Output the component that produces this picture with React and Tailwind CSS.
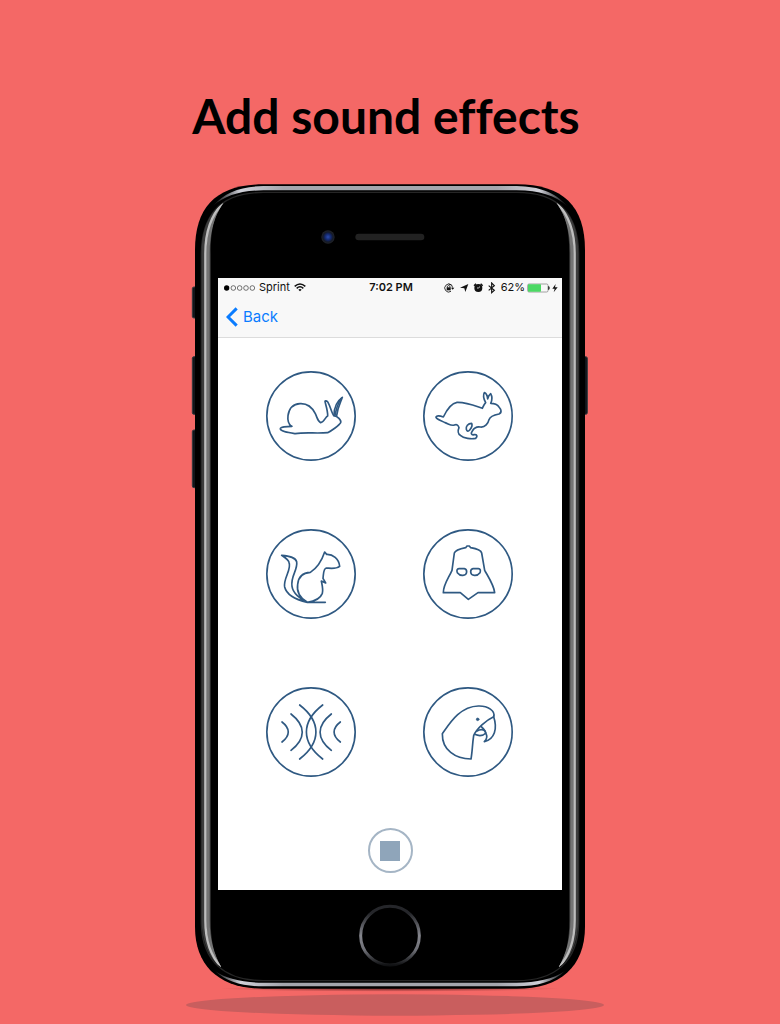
import React from "react";

const effects = [
  {
    name: "Slow",
    art: (
      <>
        <path d="M96 184C80 184 60 186 61 192C63 199 82 202 106 206C135 201 168 206 203 203C214 198 238 181 242 173C245 166 232 153 222 152C216 148 212 126 204 112C200 107 195 106 195 110C198 122 204 140 203 153C196 156 192 172 182 173C172 168 172 158 166 146C154 122 137 115 120 116C99 117 87 132 84 152C82 168 87 178 94 184" />
        <path d="M222 152C222 130 231 108 247 97C243 110 233 126 230 152" />
        <path d="M226 150C228 132 234 116 243 101" />
      </>
    ),
  },
  {
    name: "Fast",
    art: (
      <>
        <path d="M196 130C178 124 150 111 120 112C102 115 88 137 79 156C70 153 57 150 57 157C59 164 75 167 84 173C94 176 104 184 112 180C120 177 124 181 126 188C122 197 123 207 130 211C140 220 163 223 176 220C183 213 180 208 171 209C163 211 161 205 166 198C171 189 178 184 190 186C204 188 214 174 216 164C219 154 230 150 246 147C256 142 252 133 246 126C241 118 233 115 221 115C226 105 225 93 221 86C216 90 213 95 212 102C211 92 206 84 202 83C198 90 200 102 206 113C200 119 199 124 196 130Z" />
        <path d="M164 175C153 175 146 184 148 193C150 200 154 200 158 195C163 189 167 181 164 175Z" />
      </>
    ),
  },
  {
    name: "Squirrel",
    art: (
      <path d="M196 238H142C112 231 80 217 74 192C69 166 96 139 87 118C84 108 69 100 65 97C88 99 106 102 110 116C114 142 91 159 96 190C99 210 120 229 142 238C119 224 109 208 113 184C115 162 129 149 151 148C170 136 186 111 194 87L200 94C218 93 237 108 239 130C227 139 213 136 199 135C190 137 191 150 189 166L197 180L184 174C187 188 190 200 187 211C181 227 162 235 142 238" />
    ),
  },
  {
    name: "Villain",
    art: (
      <>
        <path d="M146 74L150 69H157L161 74C173 76 192 80 194 90L203 142C214 162 231 187 233 209H183L154 229L130 209H79C79 184 95 165 105 142L112 90C115 81 132 77 146 74Z" />
        <path d="M126 137H142Q149 138 149 147Q148 157 138 157Q128 158 121 149Q117 138 126 137Z" />
        <path d="M184 137H168Q161 138 161 147Q162 157 172 157Q182 158 189 149Q193 138 184 137Z" />
      </>
    ),
  },
  {
    name: "Echo",
    art: (
      <>
        <path d="M66 123C91 142 91 164 66 183" />
        <path d="M93 99C138 134 138 173 93 208" />
        <path d="M119 72C184 122 184 184 119 234" />
        <path d="M241 123C216 142 216 164 241 183" />
        <path d="M214 99C169 134 169 173 214 208" />
        <path d="M188 72C123 122 123 184 188 234" />
      </>
    ),
  },
  {
    name: "Parrot",
    art: (
      <>
        <path d="M162 234C115 234 75 207 76 158C100 124 130 76 184 75C213 74 236 90 230 107C208 117 178 144 170 164C166 190 166 212 162 234Z" />
        <path d="M230 107C242 143 233 174 202 182C210 174 211 164 206 157C205 147 200 143 193 137" />
        <path d="M173 160C187 166 200 163 207 156M180 150C190 144 200 146 205 151" />
        <circle cx="182" cy="115" r="4" fill="currentColor" strokeWidth="2" />
      </>
    ),
  },
];

function EffectButton({ name, art }) {
  return (
    <button type="button" aria-label={name} className="size-[90px] rounded-full text-[#2f5982]">
      <svg
        viewBox="18 18 270 270"
        className="size-full"
        fill="none"
        stroke="currentColor"
        strokeWidth="5"
        strokeLinecap="round"
        strokeLinejoin="round"
        aria-hidden="true"
      >
        <circle cx="153" cy="153" r="132.5" />
        {art}
      </svg>
    </button>
  );
}

function SideHighlight() {
  return (
    <>
      <path d="M131 98C84 130 65 180 65 250V2250C66 2320 90 2370 124 2392C100 2350 92 2310 92 2250V250C92 180 101 140 131 98Z" fill="#3c3c3c" />
      <g clipPath="url(#band)">
        <path d="M131 100C98 135 84 185 84 250V2250C84 2320 100 2360 124 2390" stroke="#747474" strokeWidth="10" />
        <path d="M131 98C92 135 76 185 76 250V2250C76 2320 98 2365 124 2391" stroke="#bdbdbd" strokeWidth="7" />
      </g>
    </>
  );
}

function PhoneShell() {
  return (
    <svg
      viewBox="0 0 1290 2562"
      className="pointer-events-none absolute -left-[15px] -top-[14px] h-[854px] w-[430px] max-w-none"
      fill="none"
      aria-hidden="true"
    >
      <defs>
        <clipPath id="band">
          <path d="M131 98C84 130 65 180 65 250V2250C66 2320 90 2370 124 2392C100 2350 92 2310 92 2250V250C92 180 101 140 131 98Z" />
        </clipPath>
        <linearGradient id="rim" x1="95" x2="1165" y1="0" y2="0" gradientUnits="userSpaceOnUse">
          <stop offset="0" stopColor="#b9bbc4" stopOpacity="0" />
          <stop offset=".08" stopColor="#cfd0d8" />
          <stop offset=".2" stopColor="#a4a6ad" />
          <stop offset=".8" stopColor="#a4a6ad" />
          <stop offset=".92" stopColor="#cfd0d8" />
          <stop offset="1" stopColor="#b9bbc4" stopOpacity="0" />
        </linearGradient>
        <linearGradient id="ring" x1="0" y1="0" x2="0" y2="1">
          <stop offset="0" stopColor="#25262a" />
          <stop offset=".12" stopColor="#25262a" />
          <stop offset=".5" stopColor="#85868d" />
          <stop offset=".75" stopColor="#6c6d74" />
          <stop offset="1" stopColor="#101113" />
        </linearGradient>
        <radialGradient id="contact">
          <stop offset="0" stopColor="#5a2020" stopOpacity=".8" />
          <stop offset="1" stopColor="#5a2020" stopOpacity="0" />
        </radialGradient>
        <radialGradient id="lens">
          <stop offset="0" stopColor="#2a4bb0" />
          <stop offset=".5" stopColor="#122461" />
          <stop offset=".75" stopColor="#151a26" />
          <stop offset="1" stopColor="#22242a" />
        </radialGradient>
      </defs>
      <ellipse cx="645" cy="2505" rx="627" ry="32" fill="#c95e5e" />
      <ellipse cx="630" cy="2456" rx="510" ry="9" fill="url(#contact)" />
      <g fill="#11151a" stroke="#33383d" strokeWidth="3">
        <rect x="37" y="351" width="14" height="93" rx="5" />
        <rect x="37" y="560" width="14" height="173" rx="5" />
        <rect x="37" y="780" width="14" height="173" rx="5" />
        <rect x="1208" y="560" width="14" height="173" rx="5" />
      </g>
      <path
        d="M45 240C45 110 110 43 250 43H1010C1150 43 1215 110 1215 240V2270C1215 2390 1140 2456 1010 2456H250C120 2456 45 2390 45 2270Z"
        fill="#000"
      />
      <path d="M64 250C66 125 130 67 250 67H1010C1130 67 1194 125 1196 250V2260C1194 2375 1125 2432 1010 2432H250C135 2432 66 2375 64 2260Z" stroke="#262626" strokeWidth="4" />
      <path d="M98 108C137 66 180 50 250 48H1010C1080 50 1123 66 1162 108C1123 76 1080 62 1010 61H250C180 62 137 76 98 108Z" fill="url(#rim)" />
      <path d="M105 2403C140 2436 190 2449 250 2449H1010C1070 2449 1120 2436 1155 2403C1120 2427 1070 2438 1010 2438H250C190 2438 140 2427 105 2403Z" fill="url(#rim)" />
      <SideHighlight />
      <g transform="translate(1260 0) scale(-1 1)">
        <SideHighlight />
      </g>
      <circle cx="444" cy="201" r="20" fill="url(#lens)" />
      <rect x="526" y="191" width="207" height="20" rx="10" fill="#222" />
      <circle cx="630" cy="2297" r="88" stroke="url(#ring)" strokeWidth="9" />
    </svg>
  );
}

function StatusIcons() {
  return (
    <svg viewBox="0 0 162 36" className="h-3 w-[54px]" fill="none" stroke="#111" strokeWidth="3" aria-hidden="true">
      <path d="M25 9A12 12 0 1 0 24 28M17 6A12 12 0 0 1 29 17" strokeWidth="2.5" />
      <path d="M24 17H34L29 23Z" fill="#111" stroke="none" />
      <rect x="11" y="16" width="12" height="9" fill="#111" stroke="none" />
      <path d="M13 17V13Q17 8 21 13V17" strokeWidth="2.5" />
      <path d="M51 17L76 6L67 30L64 19Z" fill="#111" stroke="none" />
      <circle cx="106" cy="18" r="12" fill="#111" stroke="none" />
      <path d="M93 11L99 5M113 5L119 11" strokeWidth="4" />
      <path d="M106 18L111 14M106 18H102" stroke="#f8f8f8" strokeWidth="2.5" />
      <path d="M137 11L154 25L146 32V3L154 11L137 25" strokeWidth="3.5" />
    </svg>
  );
}

export default function App() {
  return (
    <main className="flex min-h-screen flex-col items-center overflow-hidden bg-[#f46866] pb-9 pt-[87px] font-['Inter',sans-serif]">
      <h1 className="pr-2 text-center font-['Lato',sans-serif] text-[48px] font-bold leading-[58px] text-black [font-variant-ligatures:none]">
        Add sound effects
      </h1>
      <div className="relative mt-[39px] w-[390px] px-[23px] pb-[98px] pt-[94px]">
        <PhoneShell />
        <section className="relative bg-white">
          <header className="border-b border-[#dcdcdc] bg-[#f8f8f8]">
            <div className="grid grid-cols-[1fr_auto_1fr] items-center px-1 pl-[6px] text-[11px] leading-[19px] text-[#111]">
              <div className="flex items-center gap-1">
                <svg viewBox="0 0 93 18" className="h-[6px] w-[31px]" fill="none" stroke="#333" strokeWidth="2" aria-hidden="true">
                  <circle cx="8" cy="9" r="8" fill="#000" stroke="none" />
                  <circle cx="28" cy="9" r="7" />
                  <circle cx="47" cy="9" r="7" />
                  <circle cx="66" cy="9" r="7" />
                  <circle cx="85" cy="9" r="7" />
                </svg>
                <span>Sprint</span>
                <svg viewBox="0 0 36 27" className="h-[9px] w-3" fill="none" stroke="#111" strokeWidth="4.5" aria-hidden="true">
                  <path d="M2 10Q18 -4 34 10M8 16Q18 7 28 16" />
                  <path d="M13 20Q18 16 23 20L18 25Z" fill="#111" stroke="none" />
                </svg>
              </div>
              <span className="font-semibold">7:02 PM</span>
              <div className="flex items-center justify-end">
                <StatusIcons />
                <span className="ml-1">62%</span>
                <svg viewBox="0 0 93 30" className="ml-[2px] h-[10px] w-[31px] shrink-0" fill="none" aria-hidden="true">
                  <rect x="2" y="3" width="61" height="24" rx="4" stroke="#777" strokeWidth="2" />
                  <rect x="3" y="4" width="39" height="22" rx="2" fill="#4cd964" />
                  <path d="M65 10Q69 15 65 20Z" fill="#111" stroke="#111" strokeWidth="2" />
                  <path d="M86 3L76 17H83L80 28L92 13H84Z" fill="#111" />
                </svg>
              </div>
            </div>
            <nav className="flex h-10 items-center px-2">
              <a href="#back" className="flex items-center gap-[5px] text-[15px] leading-5 text-[#0a7cff]">
                <svg viewBox="0 0 36 60" className="h-5 w-3" fill="none" stroke="currentColor" strokeWidth="9" aria-hidden="true">
                  <path d="M32 4L6 30L32 56" />
                </svg>
                Back
              </a>
            </nav>
          </header>
          <div className="grid grid-cols-[90px_90px] gap-x-[67px] gap-y-[68px] px-12 pt-[33px]">
            {effects.map((effect) => (
              <EffectButton key={effect.name} {...effect} />
            ))}
          </div>
          <div className="flex justify-center pb-[17px] pt-[51px]">
            <button
              type="button"
              aria-label="Stop"
              className="flex size-[45px] items-center justify-center rounded-full border-2 border-[#a5b5c5]"
            >
              <span className="size-5 bg-[#8fa5ba]" />
            </button>
          </div>
        </section>
      </div>
    </main>
  );
}
